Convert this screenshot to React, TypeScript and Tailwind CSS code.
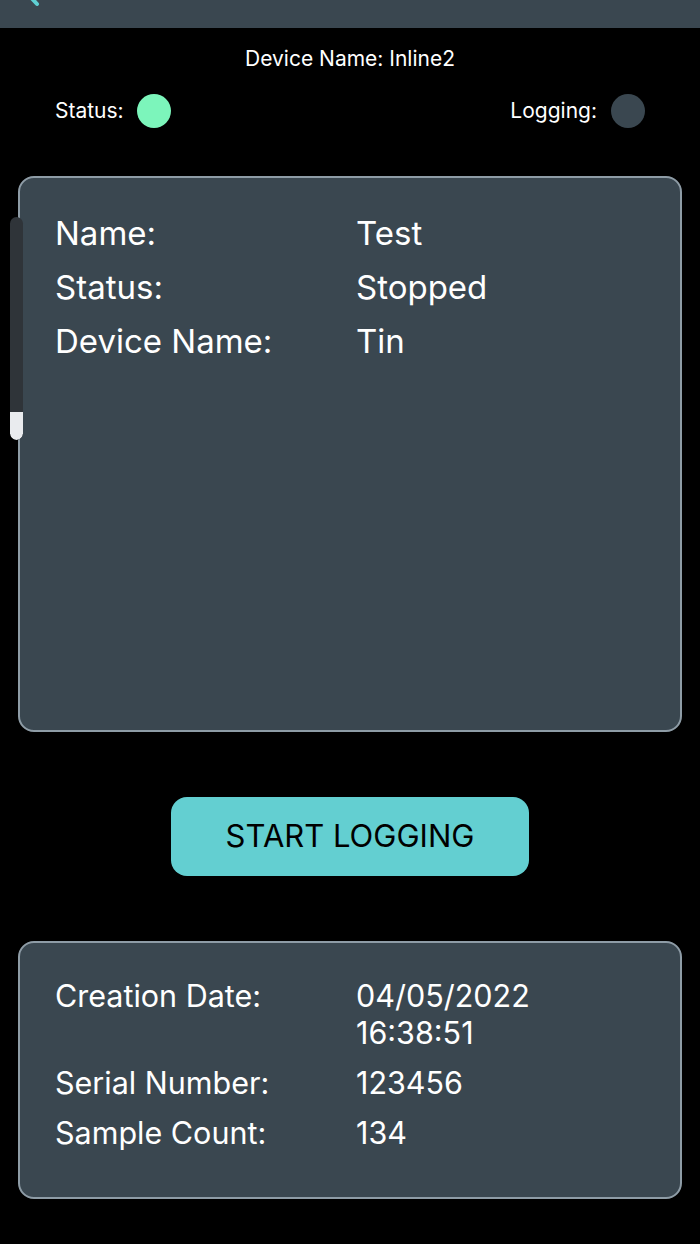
const font = { fontFamily: 'Inter, "Noto Sans", sans-serif' };

function Row({ label, value, size }: { label: string; value: React.ReactNode; size: 'lg' | 'md' }) {
  return (
    <div
      className={
        size === 'lg'
          ? 'flex text-[33px] leading-[54px] text-white'
          : 'flex text-[30.5px] leading-[37px] text-white'
      }
    >
      <div className="w-[301px] shrink-0">{label}</div>
      <div>{value}</div>
    </div>
  );
}

export default function App() {
  return (
    <div className="w-[700px] h-[1244px] bg-black overflow-hidden relative" style={font}>
      {/* Header */}
      <div className="relative h-[28px] bg-[#3a4750] overflow-hidden">
        <svg className="absolute left-[20px] top-[-22px]" width="30" height="30" viewBox="0 0 30 30">
          <path d="M18 4 L6 14 L17 26" stroke="#5fd0d3" strokeWidth="4" strokeLinecap="round" strokeLinejoin="round" fill="none" />
        </svg>
      </div>

      {/* Device name */}
      <div className="mt-[19px] text-center text-white text-[21px] leading-[24px]">Device Name: Inline2</div>

      {/* Status row */}
      <div className="mt-[23px] flex items-center justify-between pl-[55px] pr-[55px]">
        <div className="flex items-center gap-[13px]">
          <span className="text-white text-[21px]">Status:</span>
          <span className="w-[34px] h-[34px] rounded-full bg-[#7cf5bb]" />
        </div>
        <div className="flex items-center gap-[14px]">
          <span className="text-white text-[21px]">Logging:</span>
          <span className="w-[34px] h-[34px] rounded-full bg-[#3a4750]" />
        </div>
      </div>

      {/* Info card */}
      <div className="relative mt-[48px] mx-[18px] h-[556px] rounded-[16px] border-2 border-[#8e9ca6] bg-[#3a4750] pt-[28px] pl-[35px]">
        <Row label="Name:" value="Test" size="lg" />
        <Row label="Status:" value="Stopped" size="lg" />
        <Row label="Device Name:" value="Tin" size="lg" />
      </div>

      {/* Scroll indicator */}
      <div className="absolute left-[10px] top-[217px] w-[13px] h-[223px] rounded-full bg-[#2f3439] overflow-hidden flex flex-col justify-end">
        <div className="h-[28px] bg-[#e9ebee] rounded-b-full" />
      </div>

      {/* Button */}
      <div className="mt-[65px] flex justify-center">
        <button className="w-[358px] h-[79px] rounded-[16px] bg-[#63cfd1] text-black text-[31px]">
          START LOGGING
        </button>
      </div>

      {/* Details card */}
      <div className="mt-[65px] mx-[18px] h-[258px] rounded-[16px] border-2 border-[#8e9ca6] bg-[#3a4750] pt-[34px] pl-[35px] flex flex-col gap-[13px]">
        <Row
          label="Creation Date:"
          value={
            <>
              04/05/2022
              <br />
              16:38:51
            </>
          }
          size="md"
        />
        <Row label="Serial Number:" value="123456" size="md" />
        <Row label="Sample Count:" value="134" size="md" />
      </div>
    </div>
  );
}
